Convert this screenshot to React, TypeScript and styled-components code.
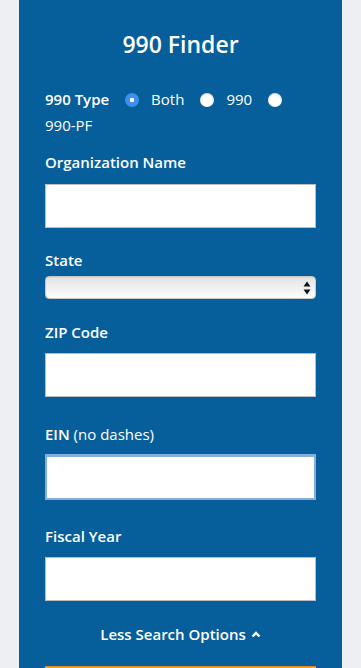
import React from 'react'
import styled, { createGlobalStyle } from 'styled-components'

const GlobalStyle = createGlobalStyle`
  html, body {
    margin: 0;
    padding: 0;
    background: #eeeff2;
    font-family: "Open Sans", "Liberation Sans", sans-serif;
    overflow: hidden;
  }
`

const Panel = styled.form`
  margin: 0 19px;
  padding: 29px 26px 0;
  height: 668px;
  box-sizing: border-box;
  background: #065e9a;
  color: #fff;
  overflow: hidden;
`

const Title = styled.h2`
  margin: 0;
  font-size: 23px;
  line-height: 30px;
  font-weight: 600;
  text-align: center;
`

const TypeRow = styled.div`
  margin-top: 27px;
  font-size: 15px;
  line-height: 26px;
`

const TypeLabel = styled.strong`
  font-weight: 600;
`

const Option = styled.label`
  display: inline;
`

const Radio = styled.input.attrs({ type: 'radio' })`
  appearance: none;
  -webkit-appearance: none;
  display: inline-block;
  width: 14px;
  height: 14px;
  margin: 0 12px 0 16px;
  vertical-align: -2px;
  border-radius: 50%;
  background: #fff;
  box-shadow: inset 0 1px 2px rgba(0, 0, 0, 0.2);

  &:checked {
    background: radial-gradient(circle, #fff 0 2px, #3d8fe8 2.5px);
    box-shadow: none;
  }
`

const Field = styled.div<{ $top: number }>`
  margin-top: ${p => p.$top}px;
`

const Label = styled.label<{ $space: number }>`
  display: block;
  margin-bottom: ${p => p.$space}px;
  font-size: 15px;
  line-height: 20px;
  font-weight: 600;
`

const Light = styled.span`
  font-weight: 400;
`

const TextInput = styled.input<{ $focused?: boolean }>`
  display: block;
  width: 100%;
  height: ${p => (p.$focused ? 46 : 44)}px;
  box-sizing: border-box;
  border: ${p => (p.$focused ? '2px solid #85aedc' : '1px solid #b9bcc0')};
  border-top-width: ${p => (p.$focused ? '3px' : '1px')};
  background: #fff;
  outline: none;
  font: inherit;
`

const SelectWrap = styled.div`
  position: relative;
`

const Select = styled.select`
  display: block;
  width: 100%;
  height: 23px;
  appearance: none;
  -webkit-appearance: none;
  border: 1px solid #c4c6c9;
  border-radius: 4px;
  background: linear-gradient(#e3e3e3, #fdfdfd);
  box-shadow: inset 0 1px 0 rgba(0, 0, 0, 0.05);
`

const Arrows = styled.svg`
  position: absolute;
  right: 5px;
  top: 5px;
  pointer-events: none;
`

const More = styled.div`
  margin-top: 23px;
  display: flex;
  justify-content: center;
  align-items: center;
  gap: 5px;
  font-size: 15px;
  line-height: 20px;
  font-weight: 600;
`

const SearchButton = styled.button`
  display: block;
  width: 100%;
  height: 40px;
  margin-top: 22px;
  border: none;
  border-top: 1px solid #e58e1a;
  background: #f39c2a;
`

const App: React.FC = () => {
  return (
    <>
      <GlobalStyle />
      <Panel>
        <Title>990 Finder</Title>
        <TypeRow>
          <TypeLabel>990 Type</TypeLabel>
          <Option>
            <Radio name="type" defaultChecked />
            Both
          </Option>
          <Option>
            <Radio name="type" />
            990
          </Option>
          <Option>
            <Radio name="type" />
            990-PF
          </Option>
        </TypeRow>

        <Field $top={14}>
          <Label $space={12}>Organization Name</Label>
          <TextInput />
        </Field>

        <Field $top={22}>
          <Label $space={6}>State</Label>
          <SelectWrap>
            <Select />
            <Arrows width="8" height="14" viewBox="0 0 8 14">
              <path d="M4 0.5 L7.5 5.5 H0.5 Z" fill="#111" />
              <path d="M4 13.5 L7.5 8.5 H0.5 Z" fill="#111" />
            </Arrows>
          </SelectWrap>
        </Field>

        <Field $top={23}>
          <Label $space={11}>ZIP Code</Label>
          <TextInput />
        </Field>

        <Field $top={27}>
          <Label $space={10}>
            EIN <Light>(no dashes)</Light>
          </Label>
          <TextInput $focused />
        </Field>

        <Field $top={26}>
          <Label $space={11}>Fiscal Year</Label>
          <TextInput />
        </Field>

        <More>
          Less Search Options
          <svg width="10" height="7" viewBox="0 0 10 7">
            <polyline points="1.5,5.5 5,2 8.5,5.5" fill="none" stroke="#fff" strokeWidth="2.4" />
          </svg>
        </More>

        <SearchButton type="button" />
      </Panel>
    </>
  )
}

export default App
